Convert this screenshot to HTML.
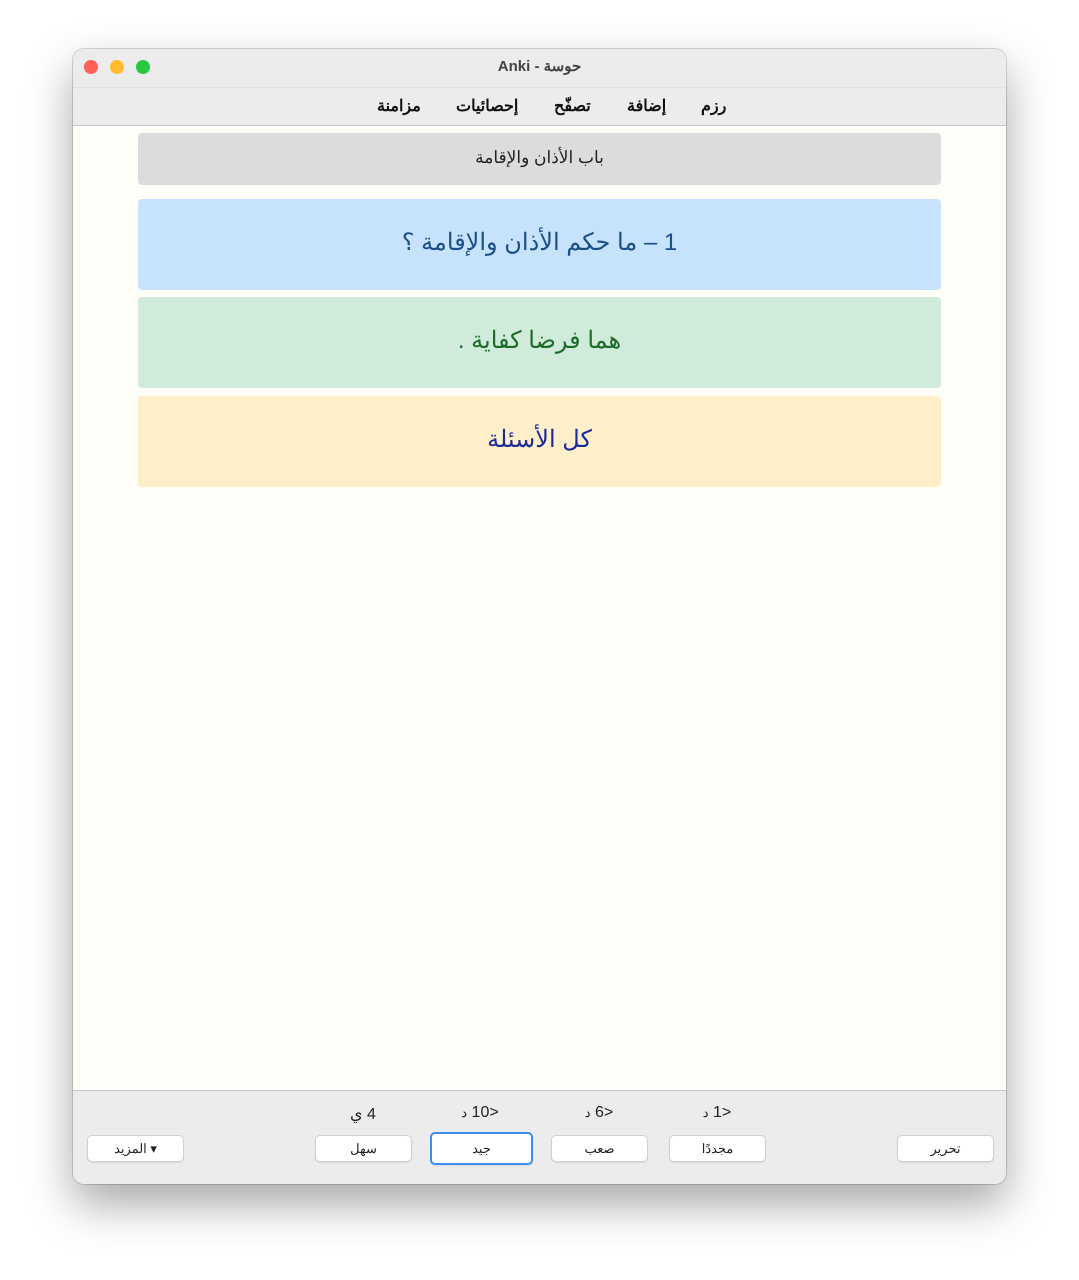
<!DOCTYPE html>
<html><head><meta charset="utf-8"><style>
body{margin:0;width:1079px;height:1280px;background:#fff;position:relative;font-family:"Liberation Sans","Noto Sans CJK SC",sans-serif;overflow:hidden}
.win{position:absolute;left:73px;top:49px;width:933px;height:1135px;border-radius:11px;overflow:hidden;box-shadow:0 20px 45px rgba(0,0,0,.35),0 0 0 1px rgba(0,0,0,.15);background:#fffdf7}
.title{position:absolute;left:0;top:0;width:100%;height:38px;background:#ececec;text-align:center;line-height:36px;font-size:15px;font-weight:bold;color:#444;direction:ltr}
.ib{display:inline-block}
.dot{position:absolute;top:11px;width:14px;height:14px;border-radius:50%}
.tb{position:absolute;left:0;top:38px;width:100%;height:37px;background:#ececec;border-bottom:1px solid #c8c8c8;border-top:1px solid #e0e0e0}
.tb span{position:absolute;top:8px;font-size:16px;font-weight:bold;color:#111}
.card{position:absolute;left:65px;width:803px;border-radius:4px;text-align:center;direction:rtl}
.bot{position:absolute;left:0;top:1041px;width:100%;height:94px;background:#ececec;border-top:1px solid #c8c8c8}
.btn{position:absolute;top:44px;height:25px;background:#fff;border:1px solid #cfcfcf;border-radius:5px;font-size:13px;text-align:center;line-height:25px;color:#222;box-shadow:0 1px 1px rgba(0,0,0,.08)}
.lab{position:absolute;top:13px;font-size:16px;color:#222;text-align:center;width:96px;direction:ltr}
</style></head><body>
<div class="win">
<div class="title"><span class="ib">Anki</span> <span class="ib">-</span> <span class="ib">حوسة</span>
<div class="dot" style="left:11px;background:#fe5f57"></div>
<div class="dot" style="left:37px;background:#febc2e"></div>
<div class="dot" style="left:63px;background:#28c840"></div></div>
<div class="tb">
<span style="left:628px">رزم</span>
<span style="left:554px">إضافة</span>
<span style="left:481px">تصفّح</span>
<span style="left:383px">إحصائيات</span>
<span style="left:304px">مزامنة</span>
</div>
<div class="card" style="top:84px;height:52px;background:#dcdcdc;line-height:50px;font-size:17px;color:#222">باب الأذان والإقامة</div>
<div class="card" style="top:150px;height:91px;background:#c6e3fb;line-height:88px;font-size:24px;color:#1b4f8a">1 – ما حكم الأذان والإقامة ؟</div>
<div class="card" style="top:248px;height:91px;background:#d0ebd9;line-height:88px;font-size:24px;color:#1d6b2a">هما فرضا كفاية .</div>
<div class="card" style="top:347px;height:91px;background:#feefca;line-height:88px;font-size:24px;color:#1c2a9a">كل الأسئلة</div>
<div class="bot">
<div class="lab" style="left:596px"><span class="ib" style="font-size:13px">د</span> <span class="ib">1&gt;</span></div>
<div class="lab" style="left:478px"><span class="ib" style="font-size:13px">د</span> <span class="ib">6&gt;</span></div>
<div class="lab" style="left:359px"><span class="ib" style="font-size:13px">د</span> <span class="ib">10&gt;</span></div>
<div class="lab" style="left:242px"><span class="ib">ي</span> <span class="ib">4</span></div>
<div class="btn" style="left:824px;width:95px">تحرير</div>
<div class="btn" style="left:596px;width:95px">مجددًا</div>
<div class="btn" style="left:478px;width:95px">صعب</div>
<div class="btn" style="left:357px;top:41px;width:99px;height:29px;line-height:29px;border:2px solid #3d8ef0;border-radius:5px">جيد</div>
<div class="btn" style="left:242px;width:95px">سهل</div>
<div class="btn" style="left:14px;width:95px">المزيد ▾</div>
</div>
</div>
</body></html>
